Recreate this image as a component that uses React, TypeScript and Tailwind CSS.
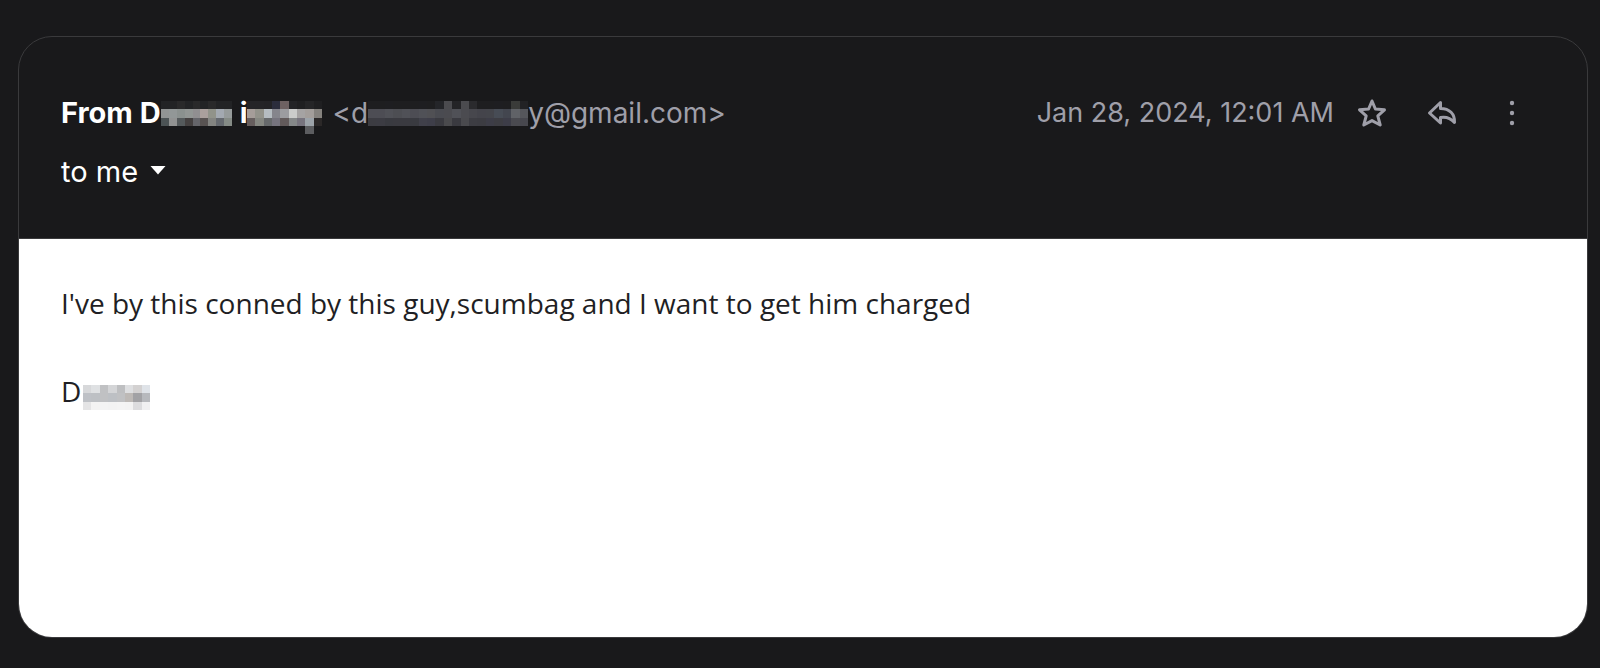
import { useState } from "react";

const nameCells = [
  ["#222325", "#222325", "#29292a", "#222325", "#29292a", "#222325", "#29292a", "#222325", "#222325"],
  ["#919494", "#929797", "#8b918f", "#929694", "#918f91", "#aaa09d", "#91938a", "#a3a9b1", "#969b9b"],
  ["#4c5355", "#919292", "#555a5c", "#454141", "#65656a", "#585352", "#838481", "#65696f", "#858b86"],
];

const surnameCells = [
  ["#242427", "#242427", "#232326", "#2b2d3c", "#6d6162", "#232326", "#1f1f21", "#252527", "#1f1f21"],
  ["#a59d99", "#92928a", "#b5bcc1", "#85858c", "#9c9ca0", "#cbcccb", "#a5a3a3", "#a39e9b", "#85827e"],
  ["#665e5e", "#858781", "#66696b", "#76747e", "#625a5b", "#858889", "#77747e", "#9ca3a9", "#2b2828"],
  ["", "", "", "", "", "", "", "#5c5d60", ""],
];

const addressCells = [
  ["#1e1e20", "#1e1e20", "#1e1e21", "#1e1e20", "#1e1e20", "#1e1e20", "#1e1e21", "#1e1e20", "#242529", "#4b4b4f", "#242427", "#4b4b4f", "#2a2a2d", "#1e1e20", "#1e1e20", "#1e1e21", "#1e1e20", "#3a3b39", "#222225"],
  ["#4d4d54", "#4d4d54", "#505157", "#4d4e53", "#505157", "#4d4d54", "#505157", "#505054", "#4a4b51", "#4b4b50", "#505157", "#4b4b50", "#47474d", "#44444b", "#44454b", "#474c55", "#43464f", "#606267", "#55565b"],
  ["#3c3c42", "#3c3c43", "#393a40", "#3a3a40", "#3a3a40", "#393a40", "#40404a", "#3e3e49", "#3a3a40", "#4a4a4d", "#3a3a40", "#4a4a4e", "#3d3d43", "#3c3c42", "#3d3d47", "#3d3d43", "#3d3d48", "#4a4a50", "#47474e"],
];

const signatureCells = [
  ["#d7d8da", "#dfe1e3", "#c0c1c3", "#d4d5d7", "#bebfc1", "#dedfe1", "#d3d1d1", "#dfe3e8"],
  ["#bec1c6", "#bdc0c4", "#c0c1c3", "#bdc0c4", "#c0c1c3", "#bdb9b6", "#a2a2a5", "#b7b9bd"],
  ["#e4e4e5", "#f3f3f3", "#f4f4f4", "#f3f3f3", "#f4f4f4", "#f3f3f3", "#dcdcde", "#f0f0f1"],
];

function Mosaic({ cells, className }: { cells: string[][]; className: string }) {
  return (
    <svg
      aria-hidden="true"
      className={`shrink-0 ${className}`}
      viewBox={`0 0 ${cells[0].length} ${cells.length}`}
      preserveAspectRatio="none"
      shapeRendering="crispEdges"
    >
      {cells.map((row, y) =>
        row.map((fill, x) => (fill ? <rect key={`${x}-${y}`} x={x} y={y} width="1" height="1" fill={fill} /> : null))
      )}
    </svg>
  );
}

export default function App() {
  const [starred, setStarred] = useState(false);

  return (
    <main className="bg-[#19191b] pt-9 pr-3 pb-8 pl-[18px] font-['Inter',sans-serif]">
      <article className="overflow-hidden rounded-[34px] border border-[#3a3a3c]">
        <header className="border-b border-[#3a3a3c] px-[42px] pt-14 pb-[46px] leading-10">
          <div className="flex items-start justify-between">
            <div className="flex items-start whitespace-nowrap">
              <h1 className="flex items-start text-[29px] leading-10 font-bold text-white">
                From D
                <Mosaic cells={nameCells} className="mt-2 h-[25px] w-[71px]" />
                <span className="ml-2">i</span>
                <Mosaic cells={surnameCells} className="mt-2 h-[33px] w-[75px]" />
              </h1>
              <span className="ml-[10px] flex items-start text-[28px] leading-10 text-[#9f9fa9]">
                &lt;d
                <Mosaic cells={addressCells} className="mt-2 h-[25px] w-[160px]" />
                y@gmail.com&gt;
              </span>
            </div>
            <div className="flex items-center pr-[17px] text-[#9f9fa9]">
              <time dateTime="2024-01-28T00:01" className="text-[27px] leading-10 whitespace-nowrap">
                Jan 28, 2024, 12:01 AM
              </time>
              <button
                aria-label="Star"
                aria-pressed={starred}
                onClick={() => setStarred(!starred)}
                className="ml-[22px]"
              >
                <svg className="size-8" viewBox="0 0 32 32" fill={starred ? "currentColor" : "none"} stroke="currentColor" strokeWidth="3" strokeLinejoin="round">
                  <path d="M16 4 L19.4 12 L28.5 12.8 L21.8 18.8 L24.2 28 L16 23.6 L7.8 28 L10.2 18.8 L3.5 12.8 L12.6 12 Z" />
                </svg>
              </button>
              <button aria-label="Reply" className="ml-[38px]">
                <svg className="size-8" viewBox="0 0 32 32" fill="none" stroke="currentColor" strokeWidth="3" strokeLinejoin="round">
                  <path d="M14.5 5.5 L3.5 16 L14.5 26 V20.5 C20 19.5 24.5 21 28.5 25.5 C29 17 23.5 11.5 14.5 11.5 Z" />
                </svg>
              </button>
              <button aria-label="More" className="ml-[38px]">
                <svg className="size-8" viewBox="0 0 32 32" fill="currentColor">
                  <circle cx="16" cy="6" r="2.2" />
                  <circle cx="16" cy="16" r="2.2" />
                  <circle cx="16" cy="26" r="2.2" />
                </svg>
              </button>
            </div>
          </div>
          <button className="mt-[18px] flex items-center text-[29px] leading-10 text-white">
            to me
            <svg className="mb-1 ml-3 h-[9px] w-4" viewBox="0 0 16 9" fill="currentColor">
              <path d="M0.5 0 H15.5 L8 8.5 Z" />
            </svg>
          </button>
        </header>
        <section className="min-h-[398px] bg-white px-[42px] pt-[42px] font-['Open_Sans','Noto_Sans',sans-serif] text-[28px] leading-[44px] text-[#1f1f24]">
          <p>I&apos;ve by this conned by this guy,scumbag and I want to get him charged</p>
          <p className="mt-11 flex items-start">
            D
            <Mosaic cells={signatureCells} className="mt-4 ml-0.5 h-[25px] w-[67px]" />
          </p>
        </section>
      </article>
    </main>
  );
}
